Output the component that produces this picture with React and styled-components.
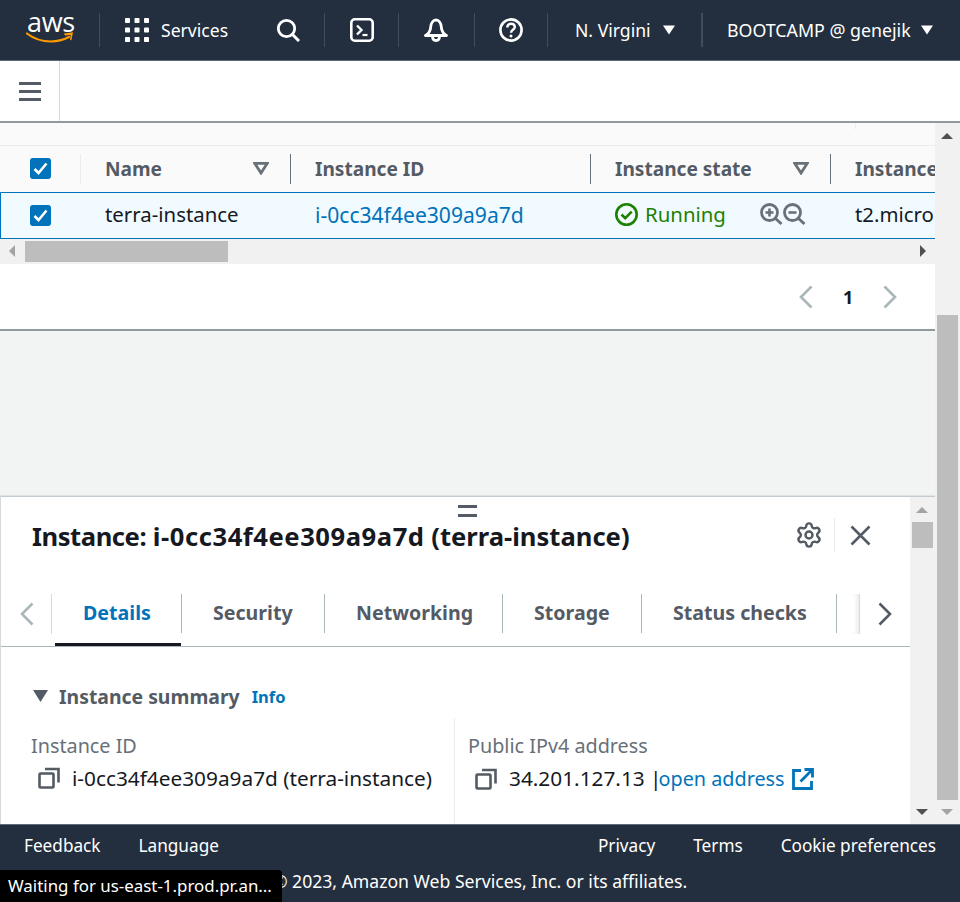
import React from "react";
import styled, { createGlobalStyle } from "styled-components";
import { Settings } from "lucide-react";

const Global = createGlobalStyle`
  html, body { margin: 0; padding: 0; height: 100%; overflow: hidden; }
  body { font-family: "Noto Sans", "Open Sans", sans-serif; font-size: 18px; color: #16191f; }
  * { box-sizing: border-box; }
`;

const Page = styled.div`
  width: 960px; height: 902px; display: flex; flex-direction: column; position: relative; overflow: hidden;
`;
const TopBar = styled.header`
  height: 61px; flex: none; background: #232f3e; display: flex; align-items: center; border-bottom: 1px solid #5f6b7a;
`;
const Segment = styled.div`
  width: ${p => p.$w}px; height: 34px; flex: none; display: flex; align-items: center;
  padding-left: ${p => p.$pl || 0}px; color: #fff; font-size: ${p => p.$fs || 17.6}px; white-space: nowrap;
  border-right: ${p => p.$last ? "none" : `${p.$thick ? 2 : 1}px solid #414d5c`};
`;
const Logo = styled.div`
  position: relative; width: 50px; height: 34px; margin-top: -1px;
`;
const LogoWord = styled.span`
  position: absolute; left: 1px; top: -8px; font-family: "Open Sans", sans-serif; font-size: 27px; line-height: 34px; color: #fff; letter-spacing: -.3px;
`;
const Smile = styled.svg`
  position: absolute; left: 0; top: 17px;
`;
const ServicesLabel = styled.span`margin-left: 12px; width: 115px;`;
const Caret = styled.svg`margin-left: ${p => p.$ml}px;`;

const SubBar = styled.div`
  height: 62px; flex: none; background: #fff; display: flex; border-bottom: 2px solid #8f9a9d;
`;
const MenuCell = styled.div`
  width: 60px; border-right: 1px solid #d5dbdb; display: flex; align-items: center; justify-content: center;
`;

const Body = styled.div`flex: 1; display: flex; min-height: 0;`;
const Main = styled.div`width: 935px; flex: none; display: flex; flex-direction: column; background: #f2f3f3;`;
const OuterBar = styled.div`
  flex: 1; background: #f1f1f1; position: relative;
`;
const Thumb = styled.div`
  position: absolute; left: ${p => p.$l}px; top: ${p => p.$t}px; width: ${p => p.$w}px; height: ${p => p.$h}px; background: #bdbdbd;
`;
const Arrow = styled.div`
  position: absolute; left: ${p => p.$l}px; top: ${p => p.$t}px; width: 0; height: 0;
  ${p => p.$dir === "up" && `border-left:6px solid transparent;border-right:6px solid transparent;border-bottom:6px solid ${p.$c};`}
  ${p => p.$dir === "down" && `border-left:6px solid transparent;border-right:6px solid transparent;border-top:6px solid ${p.$c};`}
  ${p => p.$dir === "left" && `border-top:6px solid transparent;border-bottom:6px solid transparent;border-right:6px solid ${p.$c};`}
  ${p => p.$dir === "right" && `border-top:6px solid transparent;border-bottom:6px solid transparent;border-left:6px solid ${p.$c};`}
`;

const TableTop = styled.div`
  height: 23px; flex: none; background: #fafafa; border-bottom: 1px solid #eaeded; display: flex; justify-content: flex-end;
`;
const TopTick = styled.div`width: 1px; height: 6px; background: #eaeded; margin-right: 79px;`;
const HeadRow = styled.div`
  display: grid; grid-template-columns: 81px 210px 300px 240px 105px; overflow: hidden; flex: none; align-items: center;
  height: 46px; background: #fafafa; padding-bottom: 1px;
`;
const DataRow = styled.div`
  display: grid; grid-template-columns: 79px 210px 300px 240px 105px; overflow: hidden; flex: none; align-items: center;
  height: 47px; background: #f1faff; border: 1px solid #0073bb; border-right: none;
`;
const HeadCell = styled.div`
  height: 30px; display: flex; align-items: center; justify-content: space-between; padding: 0 21px 0 24px;
  border-right: 1px solid ${p => p.$noBorder ? "transparent" : "#687078"};
  font-weight: 700; color: #545b64; font-size: 19.1px; white-space: nowrap;
`;
const CheckCell = styled.div`
  height: 30px; padding-left: ${p => p.$pl}px; display: flex; align-items: center; border-right: ${p => p.$head ? "1px solid #eaeded" : "none"};
`;
const Cell = styled.div`
  padding: 0 0 3px 25px; display: flex; align-items: center; white-space: nowrap; font-size: ${p => p.$fs || 20.4}px; height: 30px;
  color: ${p => p.$c || "#16191f"};
`;
const Check = styled.div`
  width: 21px; height: 21px; border-radius: 3px; background: #0073bb; display: flex; align-items: center; justify-content: center;
`;
const Running = styled.span`color: #1d8102; margin-left: 7px; width: 115px;`;
const HScroll = styled.div`
  height: 25px; flex: none; background: #f1f1f1; position: relative;
`;
const Pager = styled.div`
  height: 67px; flex: none; background: #fff; border-bottom: 2px solid #8f9a9d; display: flex; align-items: center; justify-content: flex-end; padding-right: 38px;
`;
const PageNum = styled.span`font-weight: 700; font-size: 18px; margin: 0 30px; color: #16191f; width: 10px; text-align: center;`;
const Gap = styled.div`flex: 1; background: #f2f3f3;`;

const Split = styled.section`
  height: 328px; flex: none; display: flex; background: #fff; border-top: 1px solid #c4cbd0; box-shadow: 0 -1px 1px #dfe3e4; border-left: 1px solid #d5dbdb;
`;
const SplitMain = styled.div`width: 909px; flex: none; display: flex; flex-direction: column;`;
const InnerBar = styled.div`flex: 1; background: #f1f1f1; position: relative;`;
const Handle = styled.div`
  height: 12px; margin-top: 8px; display: flex; flex-direction: column; justify-content: space-between; align-self: center; width: 19px; margin-left: 24px; flex: none;
  &::before, &::after { content: ""; height: 3px; background: #545b64; display: block; }
`;
const TitleRow = styled.div`
  height: 38px; display: flex; align-items: center; padding-left: 31px; flex: none;
`;
const Title = styled.h2`
  margin: 0; font-size: 25.6px; font-weight: 700; color: #16191f; flex: 1; white-space: nowrap;
`;
const TitleLabel = styled.span`letter-spacing: -.45px;`;
const TitleId = styled.span`letter-spacing: .55px;`;
const TitleIcons = styled.div`display: flex; align-items: center; height: 34px; margin-top: -2px;`;
const TitleSep = styled.div`width: 1px; height: 34px; background: #eaeded; margin: 0 15px 0 11px;`;
const Tabs = styled.div`
  margin-top: 39px; height: 53px; flex: none; display: flex; border-bottom: 1px solid #aab7b8; padding-left: 19px; align-items: flex-start;
`;
const TabChevron = styled.div`
  width: 32px; height: 40px; display: flex; align-items: center; border-right: 1px solid #d5dbdb;
`;
const Tab = styled.div`
  height: 39px; width: ${p => p.$w}px; flex: none; padding: 0 0 2px 31px; display: flex; align-items: center; font-weight: 700; font-size: 19.6px; white-space: nowrap;
  color: ${p => p.$active ? "#0073bb" : "#545b64"}; border-right: 1px solid #aab7b8; position: relative;
  ${p => p.$active && `&::after { content: ""; position: absolute; left: 3px; right: 0; bottom: -13px; height: 3px; background: #16191f; }`}
`;
const TabFade = styled.div`
  width: 23px; height: 40px; border-right: 1px solid #d5dbdb; box-shadow: inset -5px 0 5px -3px #e6e9ea; margin-right: 18px;
`;
const TabNext = styled.div`height: 39px; display: flex; align-items: center;`;
const Summary = styled.div`
  margin-top: 37px; margin-left: 32px; height: 24px; display: flex; align-items: center; flex: none;
`;
const SummaryTitle = styled.span`font-weight: 700; color: #545b64; font-size: 19.4px; margin-left: 11px;`;
const InfoLink = styled.span`font-weight: 700; color: #0073bb; font-size: 16.5px; margin-left: 12px;`;
const Columns = styled.div`
  flex: 1; display: grid; grid-template-columns: 453px 1fr; margin-top: 10px; min-height: 0;
`;
const Col = styled.div`
  padding: 16px 0 0 ${p => p.$pl}px; border-left: ${p => p.$sep ? "1px solid #eaeded" : "none"};
`;
const FieldLabel = styled.div`color: #687078; font-size: 19.8px; line-height: 24px;`;
const FieldValue = styled.div`
  margin-top: 8px; margin-left: 7px; display: flex; align-items: center; font-size: 20.8px; line-height: 24px; color: #16191f; white-space: nowrap;
`;
const ValueText = styled.span`margin-left: 12px;`;
const Link = styled.span`color: #0073bb; font-size: 19.8px; margin-left: -3px;`;

const Footer = styled.footer`
  height: 78px; flex: none; background: #232f3e; border-top: 1px solid #5f6b7a; color: #fff; font-size: 17.2px; display: flex; flex-direction: column;
`;
const FootLinks = styled.div`
  display: flex; padding: 0 24px 0; height: 41px; align-items: center; gap: 38px; flex: none;
`;
const Spacer = styled.div`flex: 1;`;
const Copy = styled.div`text-align: center; font-size: 17.6px; margin-top: 3px;`;
const Status = styled.div`
  position: absolute; left: 0; bottom: 0; width: 282px; height: 32px; background: #000; color: #fff; border-top-right-radius: 4px;
  font-size: 16.9px; line-height: 32px; padding-left: 8px; white-space: nowrap; overflow: hidden;
`;

const CaretDown = ({ ml = 0, w = 12 }) => (
  <Caret $ml={ml} width={w} height="10" viewBox="0 0 12 10"><path d="M0 .5h12L6 9.5z" fill="#fff" /></Caret>
);
const CheckMark = () => (
  <svg width="15" height="13" viewBox="0 0 15 13"><path d="M1.5 7l4 4 8-9.5" fill="none" stroke="#fff" strokeWidth="2.6" /></svg>
);
const FilterCaret = () => (
  <svg width="16" height="13" viewBox="0 0 16 13"><path d="M1.8 1.4h12.400L8 11z" fill="none" stroke="#687078" strokeWidth="2.8" /></svg>
);
const Copyish = () => (
  <svg width="22" height="22" viewBox="0 0 22 22" fill="none" stroke="#545b64" strokeWidth="2.6">
    <rect x="1.5" y="6.5" width="14" height="14" rx="1" />
    <path d="M7 2h13.5v13.5" />
  </svg>
);
const Chev = ({ dir, c, w = 14, h = 24, sw = 2.6 }) => (
  <svg width={w} height={h} viewBox="0 0 14 24" fill="none" stroke={c} strokeWidth={sw}>
    <path d={dir === "l" ? "M12.5 1.5L2 12l10.5 10.5" : "M1.5 1.5L12 12 1.5 22.5"} />
  </svg>
);
const Zoomer = ({ plus }) => (
  <svg width="23" height="22" viewBox="0 0 23 22" fill="none" stroke="#687078" strokeWidth="2.8">
    <circle cx="9.5" cy="9.5" r="8" />
    <path d="M15.5 15.5L21.5 21" />
    <path d="M5.5 9.5h8" strokeWidth="2.6" />
    {plus && <path d="M9.5 5.5v8" strokeWidth="2.6" />}
  </svg>
);

export default function App() {
  return (
    <Page>
      <Global />
      <TopBar>
        <Segment $w={100} $pl={26}>
          <Logo>
            <LogoWord>aws</LogoWord>
            <Smile width="48" height="16" viewBox="0 0 48 16">
              <path d="M1 3.5C8 9 17 11.5 25 11.5c6 0 12-1.5 18-4.5" fill="none" stroke="#ff9900" strokeWidth="2.2" strokeLinecap="round" />
              <path d="M38 3.5l9-1.2-1.6 8-1.4-.4.7-5-5.8.6z" fill="#ff9900" />
            </Smile>
          </Logo>
        </Segment>
        <Segment $w={225} $pl={25}>
          <svg width="24" height="24" viewBox="0 0 24 24" fill="#fff">
            {[0, 9.5, 19].flatMap(y => [0, 9.5, 19].map(x => <rect key={`${x}-${y}`} x={x} y={y} width="5" height="5" rx=".8" />))}
          </svg>
          <ServicesLabel>Services</ServicesLabel>
          <svg width="24" height="24" viewBox="0 0 24 24" fill="none" stroke="#fff" strokeWidth="2.8">
            <circle cx="10.5" cy="10.5" r="8.2" />
            <path d="M16.5 16.5L23 23" strokeWidth="3" />
          </svg>
        </Segment>
        <Segment $w={74} $pl={25}>
          <svg width="24" height="24" viewBox="0 0 24 24" fill="none" stroke="#fff" strokeWidth="2.6">
            <rect x="1.3" y="1.3" width="21.4" height="21.4" rx="3.5" />
            <path d="M7 7.5l4.5 4.500L7 16.500" strokeWidth="2.400" />
            <path d="M12.500 17h5" strokeWidth="2.200" />
          </svg>
        </Segment>
        <Segment $w={76} $pl={25}>
          <svg width="24" height="24" viewBox="0 0 24 24" fill="none" stroke="#fff" strokeWidth="2.8">
            <path d="M1.500 17.500h21c-3.500-2-5-4.500-5.200-8.500C17 5 15 2 12 2S7 5 6.700 9c-.2 4-1.700 6.500-5.200 8.500z" strokeLinejoin="round" />
            <path d="M8.500 18c0 3 1.500 4.500 3.500 4.500s3.500-1.500 3.500-4.500" />
          </svg>
        </Segment>
        <Segment $w={73} $pl={24}>
          <svg width="24" height="24" viewBox="0 0 24 24" fill="none" stroke="#fff" strokeWidth="2.600">
            <circle cx="12" cy="12" r="10.600" />
            <path d="M8.300 9.500c0-2.300 1.600-3.700 3.800-3.700s3.700 1.400 3.700 3.300c0 2.800-3.800 2.700-3.800 5.700" strokeWidth="2.400" />
            <circle cx="12" cy="18" r="1.500" fill="#fff" stroke="none" />
          </svg>
        </Segment>
        <Segment $w={155} $pl={27} $thick>
          N. Virgini<CaretDown ml={12} />
        </Segment>
        <Segment $w={259} $pl={24} $fs={17.8} $last>
          BOOTCAMP @ genejik<CaretDown ml={10} />
        </Segment>
      </TopBar>
      <SubBar>
        <MenuCell>
          <svg width="22" height="19" viewBox="0 0 22 19" fill="#545b64">
            <rect y="0" width="22" height="3" />
            <rect y="8" width="22" height="3" />
            <rect y="16" width="22" height="3" />
          </svg>
        </MenuCell>
      </SubBar>
      <Body>
        <Main>
          <TableTop><TopTick /></TableTop>
          <HeadRow>
            <CheckCell $pl={30} $head><Check><CheckMark /></Check></CheckCell>
            <HeadCell>Name<FilterCaret /></HeadCell>
            <HeadCell>Instance ID</HeadCell>
            <HeadCell>Instance state<FilterCaret /></HeadCell>
            <HeadCell $noBorder>Instance</HeadCell>
          </HeadRow>
          <DataRow>
            <CheckCell $pl={29}><Check><CheckMark /></Check></CheckCell>
            <Cell>terra-instance</Cell>
            <Cell $c="#0073bb" $fs={21.1}>i-0cc34f4ee309a9a7d</Cell>
            <Cell>
              <svg width="23" height="23" viewBox="0 0 23 23" fill="none" stroke="#1d8102" strokeWidth="2.6">
                <circle cx="11.500" cy="11.500" r="10.200" />
                <path d="M6.500 11.500l3.700 3.700 6.500-6.500" />
              </svg>
              <Running>Running</Running>
              <Zoomer plus />
              <Zoomer />
            </Cell>
            <Cell>t2.micro</Cell>
          </DataRow>
          <HScroll>
            <Arrow $dir="left" $l={9} $t={6} $c="#a3a3a3" />
            <Thumb $l={25} $t={2} $w={203} $h={21} />
            <Arrow $dir="right" $l={920} $t={6} $c="#505050" />
          </HScroll>
          <Pager>
            <Chev dir="l" c="#aab7b8" />
            <PageNum>1</PageNum>
            <Chev dir="r" c="#aab7b8" />
          </Pager>
          <Gap />
          <Split>
            <SplitMain>
              <Handle />
              <TitleRow>
                <Title><TitleLabel>Instance:</TitleLabel> <TitleId>i-0cc34f4ee309a9a7d</TitleId> (terra-instance)</Title>
                <TitleIcons>
                  <Settings size={28} color="#545b64" strokeWidth={2.1} />
                  <TitleSep />
                  <svg width="21" height="21" viewBox="0 0 21 21" fill="none" stroke="#545b64" strokeWidth="2.600" style={{ marginRight: 39 }}>
                    <path d="M1.500 1.500l18 18M19.500 1.500l-18 18" />
                  </svg>
                </TitleIcons>
              </TitleRow>
              <Tabs>
                <TabChevron><Chev dir="l" c="#aab7b8" /></TabChevron>
                <Tab $w={130} $active>Details</Tab>
                <Tab $w={143}>Security</Tab>
                <Tab $w={178}>Networking</Tab>
                <Tab $w={139}>Storage</Tab>
                <Tab $w={195}>Status checks</Tab>
                <TabFade />
                <TabNext><Chev dir="r" c="#545b64" /></TabNext>
              </Tabs>
              <Summary>
                <svg width="15" height="12" viewBox="0 0 15 12"><path d="M0 0h15L7.500 12z" fill="#545b64" /></svg>
                <SummaryTitle>Instance summary</SummaryTitle>
                <InfoLink>Info</InfoLink>
              </Summary>
              <Columns>
                <Col $pl={30}>
                  <FieldLabel>Instance ID</FieldLabel>
                  <FieldValue>
                    <Copyish />
                    <ValueText>i-0cc34f4ee309a9a7d (terra-instance)</ValueText>
                  </FieldValue>
                </Col>
                <Col $pl={13} $sep>
                  <FieldLabel>Public IPv4 address</FieldLabel>
                  <FieldValue>
                    <Copyish />
                    <ValueText>34.201.127.13 |<Link>open address</Link></ValueText>
                    <svg width="22" height="22" viewBox="0 0 22 22" fill="none" stroke="#0073bb" strokeWidth="2.800" style={{ marginLeft: 7 }}>
                      <path d="M9 2.500H1.500v18h18V13" />
                      <path d="M8.500 13.500L20 2M12.500 1.500h8v8" />
                    </svg>
                  </FieldValue>
                </Col>
              </Columns>
            </SplitMain>
            <InnerBar>
              <Arrow $dir="up" $l={6} $t={10} $c="#a3a3a3" />
              <Thumb $l={2} $t={25} $w={21} $h={26} />
              <Arrow $dir="down" $l={6} $t={312} $c="#505050" />
            </InnerBar>
          </Split>
        </Main>
        <OuterBar>
          <Arrow $dir="up" $l={6} $t={10} $c="#505050" />
          <Thumb $l={2} $t={192} $w={21} $h={485} />
          <Arrow $dir="down" $l={6} $t={686} $c="#a3a3a3" />
        </OuterBar>
      </Body>
      <Footer>
        <FootLinks>
          <span>Feedback</span>
          <span>Language</span>
          <Spacer />
          <span>Privacy</span>
          <span>Terms</span>
          <span>Cookie preferences</span>
        </FootLinks>
        <Copy>© 2023, Amazon Web Services, Inc. or its affiliates.</Copy>
      </Footer>
      <Status>Waiting for us-east-1.prod.pr.an...</Status>
    </Page>
  );
}
